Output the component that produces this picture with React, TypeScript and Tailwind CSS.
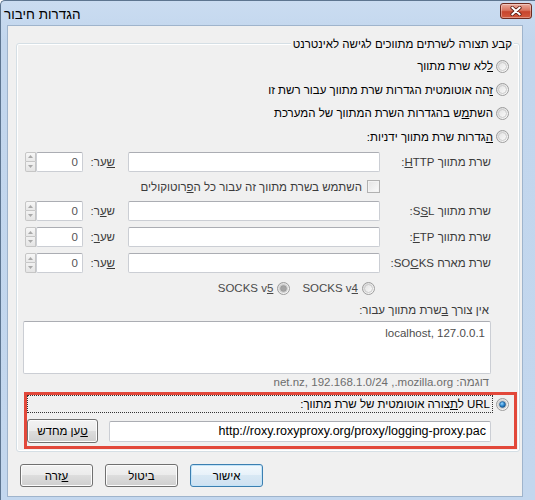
import React from "react";

type RP = { checked?: boolean; disabled?: boolean };

function Radio({ checked = false, disabled = false }: RP) {
  return (
    <svg width="13" height="13" viewBox="0 0 13 13" className="shrink-0 block">
      <defs>
        <linearGradient id="rdOuter" x1="0" y1="0" x2="1" y2="1">
          <stop offset="0" stopColor="#d6d6d6" />
          <stop offset="1" stopColor="#ffffff" />
        </linearGradient>
        <linearGradient id="rdInner" x1="0" y1="0" x2="1" y2="1">
          <stop offset="0" stopColor="#e2e2e2" />
          <stop offset="1" stopColor="#fbfbfb" />
        </linearGradient>
        <radialGradient id="rdBlue" cx="0.4" cy="0.35" r="0.7">
          <stop offset="0" stopColor="#9ad8ff" />
          <stop offset="0.55" stopColor="#2b86cf" />
          <stop offset="1" stopColor="#124f86" />
        </radialGradient>
      </defs>
      <circle cx="6.5" cy="6.5" r="6" fill="url(#rdOuter)" stroke="#9c9c9c" strokeWidth="1" />
      <circle cx="6.5" cy="6.5" r="4" fill="url(#rdInner)" stroke="#cacaca" strokeWidth="1" />
      {checked && (
        <circle
          cx="6.5"
          cy="6.5"
          r="3"
          fill={disabled ? "#a5a5a5" : "url(#rdBlue)"}
          stroke={disabled ? "#8c8c8c" : "#1b4f80"}
          strokeWidth="0.6"
        />
      )}
    </svg>
  );
}

function Checkbox() {
  return (
    <div className="w-[13px] h-[13px] shrink-0 border border-[#b1b1b1] bg-[linear-gradient(135deg,#e4e4e4,#fbfbfb)] shadow-[inset_0_0_0_1px_#f3f3f3]" />
  );
}

function Spinner() {
  return (
    <div className="w-[11px] h-[20px] shrink-0 flex flex-col">
      <div className="h-[10px] border border-[#c6c6c6] bg-[linear-gradient(#f7f7f7,#e8e8e8)] rounded-tl-[2px] flex items-center justify-center">
        <svg width="5" height="3" viewBox="0 0 5 3" className="block">
          <path d="M0 3L2.5 0L5 3Z" fill="#a9a9a9" />
        </svg>
      </div>
      <div className="h-[10px] border border-t-0 border-[#c6c6c6] bg-[linear-gradient(#f2f2f2,#e4e4e4)] rounded-bl-[2px] flex items-center justify-center">
        <svg width="5" height="3" viewBox="0 0 5 3" className="block">
          <path d="M0 0L5 0L2.5 3Z" fill="#a9a9a9" />
        </svg>
      </div>
    </div>
  );
}

function TB({ className = "", children }: { className?: string; children?: React.ReactNode }) {
  return (
    <div
      className={`h-[20px] shrink-0 bg-white border border-[#cbced4] border-t-[#abadb3] rounded-[2px] flex items-center px-[4px] whitespace-nowrap ${className}`}
    >
      {children}
    </div>
  );
}

function Btn({
  className = "",
  def = false,
  children,
}: {
  className?: string;
  def?: boolean;
  children?: React.ReactNode;
}) {
  return (
    <div
      className={`shrink-0 flex items-center justify-center rounded-[3px] border text-black ${
        def
          ? "border-[#3c7fb1] bg-[linear-gradient(#f3f9fd,#e7f1f9_50%,#d8e8f4_50%,#cfe1f1)] shadow-[inset_0_0_0_1px_#c3e4f8]"
          : "border-[#707070] bg-[linear-gradient(#f2f2f2,#ebebeb_50%,#dddddd_50%,#cfcfcf)] shadow-[inset_0_0_0_1px_#fcfcfc]"
      } ${className}`}
    >
      {children}
    </div>
  );
}

function ProxyRow({
  label,
  port,
  h,
}: {
  label: React.ReactNode;
  port: React.ReactNode;
  h: string;
}) {
  return (
    <div className={`${h} shrink-0 flex items-center pr-[28px] pl-[8px]`}>
      <span className="w-[101px] shrink-0 whitespace-nowrap text-[#3b3b3b]">{label}</span>
      <TB className="ms-[10px] w-[252px]" />
      <span className="ms-[13px] w-[25px] shrink-0 whitespace-nowrap text-[#3b3b3b]">{port}</span>
      <TB className="ms-[7px] w-[47px] justify-start px-[3px] text-[#555]">0</TB>
      <Spinner />
    </div>
  );
}

export default function App() {
  return (
    <div className="relative w-[535px] h-[500px] overflow-hidden bg-[linear-gradient(#cadcf1,#c2d6ed_40px,#c3d7ee)] border-l border-t border-[#5d7590] rounded-tl-[5px] [font-family:'Liberation_Sans','DejaVu_Sans',sans-serif] text-[11.5px] leading-[14px] text-black">
      {/* title bar */}
      <div className="h-[24px] flex items-start justify-between">
        <span dir="rtl" className="mt-[6px] ml-[3px] text-[13.5px] leading-[16px] text-black">
          הגדרות חיבור
        </span>
        <div className="mt-[2px] mr-[3px] w-[32px] h-[16px] rounded-[3px] border border-[#6e2a1f] bg-[linear-gradient(#eaab9d,#d9745f_45%,#c7452d_55%,#d35a3e)] shadow-[inset_0_0_0_1px_rgba(255,255,255,0.35)] flex items-center justify-center">
          <svg width="12" height="10" viewBox="0 0 12 10" className="block">
            <path d="M2.2 1.6L9.8 8.4M9.8 1.6L2.2 8.4" stroke="#5a1c12" strokeWidth="3.6" strokeLinecap="round" />
            <path d="M2.2 1.6L9.8 8.4M9.8 1.6L2.2 8.4" stroke="#ffffff" strokeWidth="2" strokeLinecap="round" />
          </svg>
        </div>
      </div>

      {/* client area */}
      <div
        dir="rtl"
        className="ml-[6px] w-[516px] h-[472px] bg-[#f0f0f0] border border-[#9fb4cc] flex flex-col"
      >
        {/* group box */}
        <div className="relative mt-[17px] mr-[2px] ml-[8px] h-[409px] shrink-0 border border-[#d5dfe5] rounded-[3px] shadow-[inset_0_0_0_1px_#ffffff] flex flex-col pt-[10px]">
          <span className="absolute top-[-7px] right-[5px] px-[2px] bg-[#f0f0f0] text-black whitespace-nowrap">
            קבע תצורה לשרתים מתווכים לגישה לאינטרנט
          </span>

          <div className="h-[24px] shrink-0 flex items-center pr-[10px]">
            <Radio />
            <span className="ms-[3px]">
              <u>ל</u>לא שרת מתווך
            </span>
          </div>
          <div className="h-[23px] shrink-0 flex items-center pr-[10px]">
            <Radio />
            <span className="ms-[3px]">
              <u>ז</u>הה אוטומטית הגדרות שרת מתווך עבור רשת זו
            </span>
          </div>
          <div className="h-[24px] shrink-0 flex items-center pr-[10px]">
            <Radio />
            <span className="ms-[3px]">
              השת<u>מ</u>ש בהגדרות השרת המתווך של המערכת
            </span>
          </div>
          <div className="h-[23px] shrink-0 flex items-center pr-[10px]">
            <Radio />
            <span className="ms-[3px]">
              <u>ה</u>גדרות שרת מתווך ידניות:
            </span>
          </div>

          <ProxyRow
            h="h-[27px]"
            label={
              <>
                שרת מתווך <u>H</u>TTP:
              </>
            }
            port={
              <>
                <u>ש</u>ער:
              </>
            }
          />
          <div className="h-[23px] shrink-0 flex items-center pr-[139px]">
            <Checkbox />
            <span className="ms-[5px] text-[#3b3b3b] whitespace-nowrap">
              השתמש בשרת מתווך זה עבור כל ה<u>פ</u>רוטוקולים
            </span>
          </div>
          <ProxyRow
            h="h-[26px]"
            label={
              <>
                שרת מתווך S<u>S</u>L:
              </>
            }
            port={
              <>
                ש<u>ע</u>ר:
              </>
            }
          />
          <ProxyRow
            h="h-[26px]"
            label={
              <>
                שרת מתווך <u>F</u>TP:
              </>
            }
            port={
              <>
                שע<u>ר</u>:
              </>
            }
          />
          <ProxyRow
            h="h-[26px]"
            label={
              <>
                שרת מארח SO<u>C</u>KS:
              </>
            }
            port={
              <>
                <u>ש</u>ער:
              </>
            }
          />

          <div className="h-[24px] shrink-0 flex items-center pr-[144px] text-[#4a4a4a]">
            <Radio />
            <span className="ms-[4px] whitespace-nowrap">
              SOCKS v<u>4</u>
            </span>
            <span className="ms-[12px]">
              <Radio checked disabled />
            </span>
            <span className="ms-[4px] whitespace-nowrap">
              SOCKS v<u>5</u>
            </span>
          </div>

          <div className="h-[20px] shrink-0 flex items-center pr-[30px] text-[#3b3b3b]">
            <span>
              אין צורך <u>ב</u>שרת מתווך עבור:
            </span>
          </div>

          <textarea
            readOnly
            dir="rtl"
            value="localhost, 127.0.0.1"
            className="mt-[1px] mr-[28px] w-[468px] h-[53px] shrink-0 resize-none bg-white border border-[#cbced4] border-t-[#abadb3] rounded-[2px] px-[5px] py-[4px] text-[11.5px] leading-[14px] text-[#4d4d4d] outline-none overflow-hidden"
          />

          <div className="h-[15px] shrink-0 flex items-center pr-[30px] text-[#6d6d6d]">
            <span dir="ltr" className="whitespace-nowrap">
              net.nz, 192.168.1.0/24 ,.mozilla.org :<bdi>דוגמה</bdi>
            </span>
          </div>

          <div className="mt-[6px] h-[18px] shrink-0 flex items-center pr-[10px] pl-[10px]">
            <Radio checked />
            <div className="ms-[3px] flex-1 h-[18px] border border-dotted border-[#333] flex items-center pr-[2px]">
              <span>
                URL ל<u>ת</u>צורה אוטומטית של שרת מתווך:
              </span>
            </div>
          </div>

          <div className="mt-[6px] h-[24px] shrink-0 flex items-center pr-[28px] pl-[10px]">
            <TB className="flex-1 h-[21px] text-[12.5px]">
              http://roxy.roxyproxy.org/proxy/logging-proxy.pac
            </TB>
            <Btn className="ms-[11px] w-[71px] h-[24px]">
              <span>
                <u>ט</u>ען מחדש
              </span>
            </Btn>
          </div>
        </div>

        {/* bottom buttons */}
        <div className="mt-[12px] h-[23px] shrink-0 flex justify-end gap-[12px] pl-[12px]">
          <Btn def className="w-[73px] h-[23px]">
            אישור
          </Btn>
          <Btn className="w-[73px] h-[23px]">ביטול</Btn>
          <Btn className="w-[73px] h-[23px]">
            <span>
              <u>ע</u>זרה
            </span>
          </Btn>
        </div>
      </div>

      {/* red annotation rectangle */}
      <div className="absolute left-[23px] top-[391px] w-[493px] h-[57px] border-[3px] border-[#e2483a] pointer-events-none" />
    </div>
  );
}
